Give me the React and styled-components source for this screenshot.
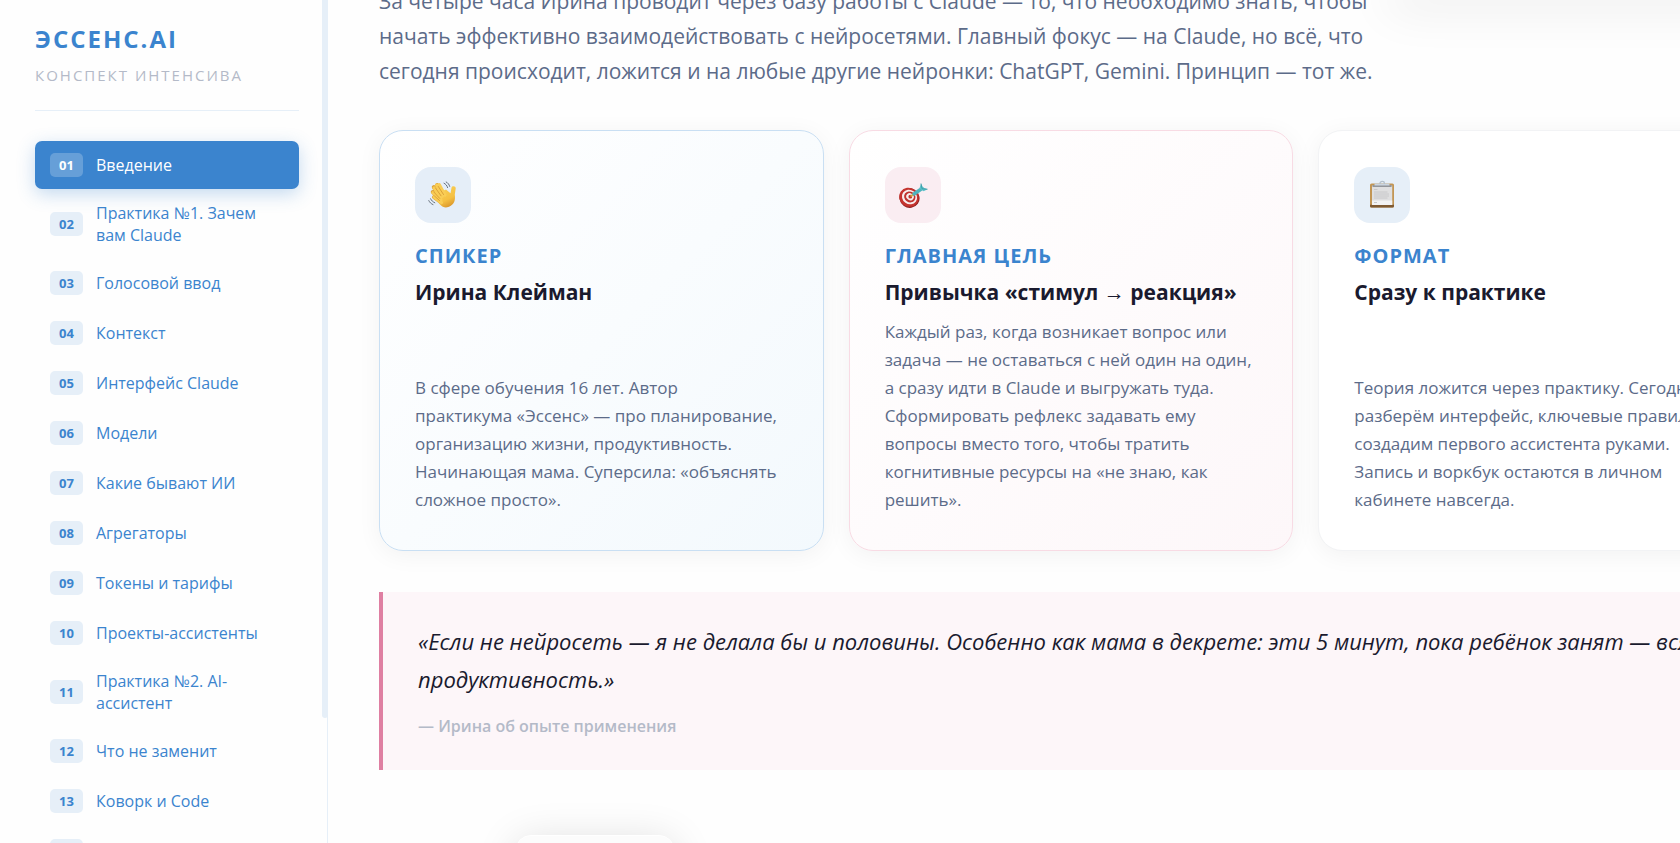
import {useState} from 'react'
import styled, {createGlobalStyle} from 'styled-components'

const GlobalStyle = createGlobalStyle`
  * {
    box-sizing: border-box;
  }
  body {
    margin: 0;
    overflow: hidden;
    background-color: #fefefe;
    font-family: 'Open Sans', 'Noto Sans', sans-serif;
    color: #1a1a2e;
  }
`
const Page = styled.div`
  display: flex;
  height: 100vh;
  overflow: hidden;
`
const Sidebar = styled.aside`
  display: flex;
  flex: 0 0 328px;
  overflow: hidden;
  box-shadow: inset -1px 0 0 #e6eff8;
`
const SidebarBody = styled.div`
  flex: 1;
  padding: 23px 23px 0 35px;
`
const ScrollTrack = styled.div`
  width: 6px;
`
const ScrollThumb = styled.div`
  height: 85.2%;
  background-color: #e6eff8;
  border-radius: 0 0 3px 3px;
`
const Brand = styled.header`
  padding-bottom: 25px;
  margin-bottom: 30px;
  border-bottom: 1px solid #e6eff8;
`
const BrandName = styled.h1`
  margin: 0 0 10px;
  font-size: 24px;
  line-height: 32px;
  font-weight: 700;
  letter-spacing: 2px;
  color: #3b84ce;
`
const BrandCaption = styled.p`
  margin: 0;
  font-size: 15px;
  line-height: 20px;
  letter-spacing: 2px;
  color: #b4bac8;
  text-transform: uppercase;
  white-space: nowrap;
`
const NavList = styled.ul`
  display: flex;
  flex-direction: column;
  gap: 2px;
  margin: 0;
  padding: 0;
  list-style-type: none;
`
const NavLink = styled.a`
  display: flex;
  align-items: center;
  gap: 13px;
  min-height: 48px;
  padding: 11px 15px;
  border-radius: 7px;
  font-size: 16px;
  line-height: 22px;
  font-weight: 500;
  text-decoration: none;
  color: ${props => (props.$active ? '#ffffff' : '#3b84ce')};
  background-color: ${props => (props.$active ? '#3b84ce' : 'transparent')};
  box-shadow: ${props =>
    props.$active ? '0 5px 18px rgba(59, 132, 206, 0.3)' : 'none'};
`
const NavNumber = styled.span`
  flex: 0 0 33px;
  height: 24px;
  border-radius: 5px;
  font-size: 13px;
  line-height: 24px;
  font-weight: 700;
  text-align: center;
  color: ${props => (props.$active ? '#ffffff' : '#3b84ce')};
  background-color: ${props =>
    props.$active ? 'rgba(255, 255, 255, 0.22)' : '#e6eff8'};
`
const Main = styled.main`
  flex: 1;
  min-width: 0;
  overflow: hidden;
  padding-left: 51px;
`
const Content = styled.div`
  min-width: 1384px;
  margin-top: -16px;
`
const IntroRow = styled.section`
  display: flex;
  align-items: flex-start;
  justify-content: space-between;
  margin-bottom: 41px;
`
const Intro = styled.p`
  flex: 0 1 1000px;
  margin: 0;
  font-size: 21px;
  line-height: 35px;
  color: #5c6b89;
`
const Photo = styled.div`
  width: 377px;
  height: 12px;
  border-radius: 0 0 24px 24px;
  background-color: #ffffff;
  box-shadow: 0 8px 48px rgba(0, 0, 0, 0.16);
`
const Cards = styled.section`
  display: grid;
  grid-template-columns: repeat(3, 1fr);
  gap: 25px;
  margin-bottom: 41px;
`
const Card = styled.article`
  display: flex;
  flex-direction: column;
  padding: 36px 36px 36px 35px;
  border: 1px solid ${props => props.$tone.border};
  border-radius: 24px;
  background: ${props => props.$tone.background};
  box-shadow: 0 4px 24px rgba(0, 0, 0, 0.05);
`
const CardIcon = styled.div`
  display: flex;
  align-items: center;
  justify-content: center;
  width: 56px;
  height: 56px;
  margin-bottom: 19px;
  border-radius: 16px;
  background-color: ${props => props.$tone.icon};
`
const CardLabel = styled.p`
  margin: 0 0 8px;
  font-size: 20px;
  line-height: 28px;
  font-weight: 700;
  letter-spacing: 1px;
  text-transform: uppercase;
  color: #3b84ce;
`
const CardTitle = styled.h2`
  margin: 0 0 12px;
  font-size: 21px;
  line-height: 28px;
  font-weight: 700;
`
const CardText = styled.p`
  margin: auto 0 0;
  font-size: 17px;
  line-height: 28px;
  color: #5c6b89;
`
const Quote = styled.blockquote`
  margin: 0 0 65px;
  padding: 30px 36px 32px 35px;
  border-left: 4px solid #df7fa2;
  background-color: #fdf6f9;
`
const QuoteText = styled.p`
  margin: 0 0 16px;
  font-size: 22px;
  line-height: 38px;
  font-style: italic;
`
const QuoteAuthor = styled.footer`
  font-size: 16px;
  line-height: 24px;
  font-weight: 600;
  color: #b4bac8;
`
const NextSection = styled.section`
  padding-left: 136px;
`
const NextBadge = styled.div`
  width: 160px;
  height: 160px;
  border: 1px solid #ffffff;
  border-radius: 16px;
  background-color: #fcfcfc;
  box-shadow: 0 5px 40px rgba(0, 0, 0, 0.13);
`

const tones = {
  blue: {
    border: '#c9dff3',
    icon: '#e5eef8',
    background: 'linear-gradient(135deg, #ffffff 0%, #f3f9fd 100%)',
  },
  pink: {
    border: '#f8dbe4',
    icon: '#faedf2',
    background: 'linear-gradient(135deg, #ffffff 0%, #fdf7f9 100%)',
  },
  plain: {
    border: '#f2f3f5',
    icon: '#e6eff8',
    background: '#ffffff',
  },
}

const WaveIcon = () => (
  <svg width="30" height="30" viewBox="0 0 30 30" fill="none">
    <defs>
      <linearGradient id="skin" x1="8" y1="4" x2="20" y2="28" gradientUnits="userSpaceOnUse">
        <stop stopColor="#fbd55f" />
        <stop offset="0.7" stopColor="#f5c042" />
        <stop offset="1" stopColor="#d9952b" />
      </linearGradient>
    </defs>
    <g stroke="#dca036" strokeWidth="4" strokeLinecap="round">
      <path d="M15 16 9 5M13 17 5.8 7.2M12 19 4.8 12M13 22 6 17.2" />
    </g>
    <path
      d="M8 14 18 9.500 22.500 13.200 23.500 7.800C24 5.600 28 6 27.700 8.600L26.800 14.500C27.400 20 26.600 23 22.800 25.800 18.500 28.600 15 27.600 12 24.500L6.500 18.500Z"
      fill="url(#skin)"
    />
    <g stroke="#f9cd55" strokeWidth="3.200" strokeLinecap="round">
      <path d="M17 15 11.200 4.600M14.500 16 8.600 5.200M13 17.500 6 8M13 20 5 12.600M13.500 22.500 6.200 17.200" />
    </g>
    <g stroke="#d79a35" strokeWidth="0.900" strokeLinecap="round">
      <path d="M10.300 6.500 15.500 14.500M7.500 8 13 15.800M5.800 12 11.800 18.500M6.500 16 11.500 20.500" />
    </g>
    <g stroke="#67717d" strokeWidth="1" strokeLinecap="round">
      <path d="M16 3.200C17.800 4 19 5.600 19.600 7.600M18.200 2C20 2.900 21.200 4.400 21.700 6.400M.800 20.600C1.700 22.400 3 23.800 5 24.600M2.600 18.800C3.500 20.600 4.800 21.900 6.800 22.800" />
    </g>
  </svg>
)

const TargetIcon = () => (
  <svg width="30" height="30" viewBox="0 0 30 30" fill="none">
    <ellipse cx="11.500" cy="18" rx="10.200" ry="9.800" fill="#8f1f1f" transform="rotate(35 11.500 18)" />
    <ellipse cx="11" cy="17.300" rx="10" ry="9.300" fill="#c5342f" transform="rotate(35 11 17.300)" />
    <ellipse cx="11.500" cy="17" rx="7.800" ry="7.100" fill="#f7eeee" transform="rotate(35 11.500 17)" />
    <ellipse cx="11.800" cy="16.900" rx="5.900" ry="5.300" fill="#bf332e" transform="rotate(35 11.800 16.900)" />
    <ellipse cx="12" cy="16.800" rx="3.900" ry="3.400" fill="#f7eeee" transform="rotate(35 12 16.800)" />
    <circle cx="12.300" cy="16.700" r="1.900" fill="#bf332e" />
    <path d="M12.500 16.500 17 13" stroke="#d8a43a" strokeWidth="1.600" />
    <path d="M16 14 24 8.500" stroke="#4eb4be" strokeWidth="3.400" strokeLinecap="round" />
    <path d="M21.500 8.200 23 3.500 25 7.600 29.500 9.200 25.600 11.200Z" fill="#5cc2cb" />
    <path d="M23 3.500 24 8.800 29.500 9.200" stroke="#3794a0" strokeWidth="0.800" />
  </svg>
)

const ClipboardIcon = () => (
  <svg width="30" height="30" viewBox="0 0 30 30" fill="none">
    <rect x="3" y="3.500" width="24" height="24" rx="1.600" fill="#c29655" />
    <path d="M3 24.800H27V26A1.500 1.500 0 0 1 25.500 27.500H4.500A1.500 1.500 0 0 1 3 26Z" fill="#7f5a32" />
    <path d="M5 5.500H25.200V25H5Z" fill="#dfdfe0" />
    <path d="M5 20.500H25.200V25H5Z" fill="#f3f3f3" />
    <path d="M7 9.500H10.500M7 12H20.500M7 14H22M7 16H22M7 18H20.500M7 22.500H10" stroke="#c8c8ca" strokeWidth="1" />
    <path d="M5.500 5H24.600V7H5.500Z" fill="#93969b" />
    <path d="M7.500 3.500H22.500V5.500H7.500Z" fill="#cbd5df" />
    <path d="M13 4V3.200A2.200 1.800 0 0 1 17.400 3.200V4" stroke="#b4c0cc" strokeWidth="1.300" />
  </svg>
)

const sections = [
  'Введение',
  'Практика №1. Зачем вам Claude',
  'Голосовой ввод',
  'Контекст',
  'Интерфейс Claude',
  'Модели',
  'Какие бывают ИИ',
  'Агрегаторы',
  'Токены и тарифы',
  'Проекты-ассистенты',
  'Практика №2. AI-ассистент',
  'Что не заменит',
  'Коворк и Code',
  'Итоги',
]

const cards = [
  {
    tone: tones.blue,
    icon: <WaveIcon />,
    label: 'Спикер',
    title: 'Ирина Клейман',
    text:
      'В сфере обучения 16 лет. Автор практикума\u00a0«Эссенс» — про планирование, организацию жизни, продуктивность. Начинающая мама. Суперсила: «объяснять сложное просто».',
  },
  {
    tone: tones.pink,
    icon: <TargetIcon />,
    label: 'Главная цель',
    title: 'Привычка «стимул → реакция»',
    text:
      'Каждый раз, когда возникает вопрос или задача — не оставаться с ней один на один, а сразу идти в Claude и выгружать туда. Сформировать рефлекс задавать ему вопросы вместо того, чтобы тратить когнитивные ресурсы на «не знаю, как решить».',
  },
  {
    tone: tones.plain,
    icon: <ClipboardIcon />,
    label: 'Формат',
    title: 'Сразу к практике',
    text:
      'Теория ложится через практику. Сегодня разберём интерфейс, ключевые правила, создадим первого ассистента руками. Запись и воркбук остаются в личном кабинете навсегда.',
  },
]

const App = () => {
  const [activeIndex, setActiveIndex] = useState(0)

  return (
    <Page>
      <GlobalStyle />
      <Sidebar>
        <SidebarBody>
          <Brand>
            <BrandName>ЭССЕНС.AI</BrandName>
            <BrandCaption>Конспект интенсива</BrandCaption>
          </Brand>
          <nav>
            <NavList>
              {sections.map((name, index) => (
                <li key={name}>
                  <NavLink
                    href={`#section-${index + 1}`}
                    $active={index === activeIndex}
                    onClick={() => setActiveIndex(index)}
                  >
                    <NavNumber $active={index === activeIndex}>
                      {String(index + 1).padStart(2, '0')}
                    </NavNumber>
                    <span>{name}</span>
                  </NavLink>
                </li>
              ))}
            </NavList>
          </nav>
        </SidebarBody>
        <ScrollTrack>
          <ScrollThumb />
        </ScrollTrack>
      </Sidebar>
      <Main>
        <Content>
          <IntroRow>
            <Intro>
              За четыре часа Ирина проводит через базу работы с Claude — то, что
              необходимо знать, чтобы начать эффективно взаимодействовать с
              нейросетями. Главный фокус — на Claude, но всё, что сегодня
              происходит, ложится и на любые другие нейронки: ChatGPT, Gemini.
              Принцип — тот же.
            </Intro>
            <Photo />
          </IntroRow>
          <Cards>
            {cards.map(({tone, icon, label, title, text}) => (
              <Card key={label} $tone={tone}>
                <CardIcon $tone={tone}>{icon}</CardIcon>
                <CardLabel>{label}</CardLabel>
                <CardTitle>{title}</CardTitle>
                <CardText>{text}</CardText>
              </Card>
            ))}
          </Cards>
          <Quote>
            <QuoteText>
              «Если не нейросеть — я не делала бы и половины. Особенно как мама в
              декрете: эти 5 минут, пока ребёнок занят — вся продуктивность.»
            </QuoteText>
            <QuoteAuthor>— Ирина об опыте применения</QuoteAuthor>
          </Quote>
          <NextSection>
            <NextBadge />
          </NextSection>
        </Content>
      </Main>
    </Page>
  )
}

export default App
